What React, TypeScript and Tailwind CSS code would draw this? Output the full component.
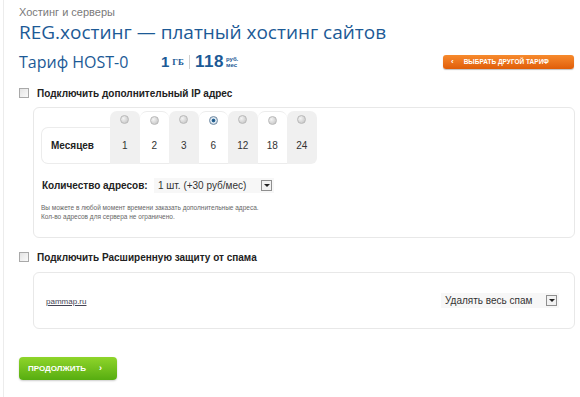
import React from "react";

const months = ["1", "2", "3", "6", "12", "18", "24"];

function Radio({ checked }: { checked?: boolean }) {
  return (
    <span
      className={
        "block w-[9px] h-[9px] rounded-full border " +
        (checked
          ? "border-[#6f8aa3] bg-[radial-gradient(circle,#1f4f7a_0,#2d6b9c_30%,#dbe7f1_45%,#c9d3dc_100%)]"
          : "border-[#b9b9b9] bg-[radial-gradient(circle_at_35%_35%,#f4f4f4_0,#cfcfcf_70%,#bdbdbd_100%)]")
      }
    />
  );
}

function Checkbox() {
  return <span className="block w-[10px] h-[10px] border border-[#a9a9a9] bg-gradient-to-br from-[#e4e4e4] to-[#fafafa]" />;
}

function SelectBox({ text, width }: { text: string; width: string }) {
  return (
    <div className={"flex items-center justify-between h-[15px] bg-[#f7f7f7] pl-[4px] pr-[2px] " + width}>
      <span className="text-[10px] text-[#333] leading-none whitespace-nowrap">{text}</span>
      <span className="flex items-center justify-center w-[11px] h-[11px] border border-[#8f8f8f] bg-[#f2f2f2]">
        <span className="block w-0 h-0 border-l-[3px] border-r-[3px] border-t-[3px] border-l-transparent border-r-transparent border-t-[#222]" />
      </span>
    </div>
  );
}

export default function App() {
  return (
    <div className="w-[580px] h-[397px] bg-white overflow-hidden pl-[3px]" style={{ fontFamily: "'Liberation Sans', Arial, sans-serif" }}>
      <div className="h-full border-l border-[#ececec] pl-[15px] pr-[5px]">
        <div className="pt-[6px] text-[11px] leading-[12px] text-[#7a7a7a]">Хостинг и серверы</div>
        <h1 className="mt-[2px] text-[19px] leading-[24px] text-[#1c5a96]" style={{ fontFamily: "'Open Sans', sans-serif" }}>REG.хостинг — платный хостинг сайтов</h1>

        <div className="flex items-center mt-[8px] h-[20px]">
          <span className="text-[16px] text-[#1c5a96] w-[142px]" style={{ fontFamily: "'Open Sans', sans-serif" }}>Тариф HOST-0</span>
          <span className="text-[15px] font-bold text-[#1c5a96]">1</span>
          <span className="text-[9px] font-bold text-[#1c5a96] ml-[3px] mt-[2px]" style={{ fontFamily: "'Liberation Serif', serif" }}>ГБ</span>
          <span className="w-px h-[14px] bg-[#d0d0d0] mx-[5px]" />
          <span className="text-[17px] font-bold text-[#1c5a96] tracking-[0.5px]">118</span>
          <span className="flex flex-col text-[6px] leading-[6px] font-bold text-[#1c5a96] ml-[2px]">
            <span>руб.</span>
            <span>мес</span>
          </span>
          <button className="ml-auto flex items-center h-[14px] w-[131px] rounded-[3px] bg-gradient-to-b from-[#f78a2c] to-[#e05d06] shadow-[0_1px_1px_rgba(0,0,0,0.25)] text-white text-[6.5px] font-bold pl-[8px] mr-[1px]">
            <span className="text-[8px] leading-none mr-[10px]">‹</span>
            ВЫБРАТЬ ДРУГОЙ ТАРИФ
          </button>
        </div>

        <label className="flex items-center gap-[8px] mt-[15px] h-[12px] text-[10px] font-bold text-[#222]">
          <Checkbox />
          Подключить дополнительный IP адрес
        </label>

        <div className="ml-[14px] mt-[8px] h-[131px] rounded-[6px] border border-[#e8e8e8] pl-[7px] pt-[3px]">
          <div className="flex items-end">
            <div className="w-[69px] h-[37px] flex items-center pl-[9px] rounded-l-[7px] border border-r-0 border-[#ececec] text-[10px] font-bold text-[#222]">
              Месяцев
            </div>
            {months.map((m, i) => (
              <div
                key={m}
                className={
                  "w-[29.5px] h-[53px] flex flex-col items-center rounded-t-[7px] " +
                  (i % 2 === 0 ? "bg-[#f0f0f0]" : "bg-white border-t border-[#ececec]") +
                  (i === months.length - 1 ? " rounded-br-[6px]" : "")
                }
              >
                <div className="h-[16px] flex items-center">
                  <Radio checked={m === "6"} />
                </div>
                <div className={"flex-1 w-full flex items-center justify-center text-[10px] text-[#333] " + (i % 2 === 1 ? "border-b border-[#ececec]" : "")}>{m}</div>
              </div>
            ))}
          </div>

          <div className="flex items-center mt-[14px] pl-[1px]">
            <span className="w-[112px] text-[10px] font-bold text-[#222] whitespace-nowrap">Количество адресов:</span>
            <SelectBox text="1 шт. (+30 руб/мес)" width="w-[120px]" />
          </div>

          <div className="mt-[10px] text-[6.5px] leading-[9px] text-[#666]">
            <div>Вы можете в любой момент времени заказать дополнительные адреса.</div>
            <div>Кол-во адресов для сервера не ограничено.</div>
          </div>
        </div>

        <label className="flex items-center gap-[8px] mt-[13px] h-[12px] text-[10px] font-bold text-[#222]">
          <Checkbox />
          Подключить Расширенную защиту от спама
        </label>

        <div className="ml-[14px] mt-[9px] h-[57px] rounded-[6px] border border-[#e8e8e8] flex items-center pl-[12px] pr-[15px]">
          <a className="text-[8px] text-[#445] underline mt-[3px]">pammap.ru</a>
          <div className="ml-auto">
            <SelectBox text="Удалять весь спам" width="w-[118px]" />
          </div>
        </div>

        <button className="mt-[28px] flex items-center h-[23px] w-[98px] rounded-[4px] bg-gradient-to-b from-[#8fd52a] to-[#56ad10] shadow-[0_1px_2px_rgba(0,0,0,0.2)] text-white text-[8px] font-bold pl-[9px]">
          ПРОДОЛЖИТЬ
          <span className="ml-[13px] text-[9px]">›</span>
        </button>
      </div>
    </div>
  );
}
